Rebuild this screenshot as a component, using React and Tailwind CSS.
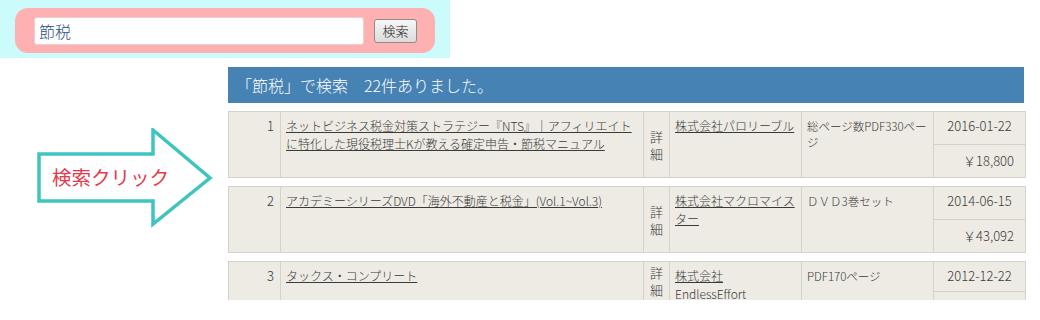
import React from 'react';

const rows = [
  {
    no: 1,
    title: 'ネットビジネス税金対策ストラテジー『NTS』｜アフィリエイトに特化した現役税理士Kが教える確定申告・節税マニュアル',
    company: ['株式会社パロリーブル'],
    desc: '総ページ数PDF330ページ',
    date: '2016-01-22',
    price: '￥18,800'
  },
  {
    no: 2,
    title: 'アカデミーシリーズDVD「海外不動産と税金」(Vol.1~Vol.3)',
    company: ['株式会社マクロマイスター'],
    desc: 'ＤＶＤ3巻セット',
    date: '2014-06-15',
    price: '￥43,092'
  },
  {
    no: 3,
    title: 'タックス・コンプリート',
    company: ['株式会社', 'EndlessEffort'],
    desc: 'PDF170ページ',
    date: '2012-12-22',
    price: '￥9,800',
    short: true
  }
];

function Arrow() {
  return (
    <svg width="228" height="110" viewBox="0 0 228 110">
      {/* 矢印の外枠 */}
      <path
        d="M39 26 L153 26 L153 2 L210 50 L153 96 L153 73 L39 73 Z"
        fill="white"
        stroke="#3fc4c0"
        strokeWidth="3.5"
        strokeLinejoin="miter"
      />
      <text
        x="52"
        y="57"
        fill="#e8394a"
        fontSize="19.5"
        fontWeight="400"
        fontFamily="'Noto Sans CJK JP', sans-serif"
      >
        検索クリック
      </text>
    </svg>
  );
}

function ResultRow({ item }) {
  const cell = 'border border-[#d4d2ca]';
  return (
    <table className="w-[797px] table-fixed border-collapse bg-[#edebe4] text-[#3a3a3a] mb-2">
      <colgroup>
        <col className="w-[52px]" />
        <col className="w-[363px]" />
        <col className="w-[26px]" />
        <col className="w-[132px]" />
        <col className="w-[132px]" />
        <col className="w-[92px]" />
      </colgroup>
      <tbody>
        <tr className={item.short ? 'h-[30px]' : 'h-[33px]'}>
          <td rowSpan={2} className={`${cell} align-top text-right pr-[6px] pt-[5px] text-[13px] leading-[18px]`}>
            {item.no}
          </td>
          <td rowSpan={2} className={`${cell} align-top px-[5px] pt-[5px] text-[12px] leading-[18px]`}>
            <a href="#" className="underline text-[#3a3a3a]">{item.title}</a>
          </td>
          {item.short ? (
            <td rowSpan={2} className={`${cell} align-top text-center pt-[2px] text-[13px] leading-[17px]`}>
              詳<br />細
            </td>
          ) : (
            <td rowSpan={2} className={`${cell} align-middle text-center text-[13px] leading-[17px]`}>
              詳<br />細
            </td>
          )}
          <td rowSpan={2} className={`${cell} align-top px-[5px] pt-[5px] text-[12px] leading-[18px]`}>
            <a href="#" className="underline text-[#3a3a3a]">
              {item.company.map((c, i) => (
                <React.Fragment key={i}>
                  {i > 0 && <br />}
                  {c}
                </React.Fragment>
              ))}
            </a>
          </td>
          <td rowSpan={2} className={`${cell} align-top px-[5px] pt-[6px] text-[11.5px] leading-[16px]`}>
            {item.desc}
          </td>
          <td className={`${cell} align-top text-center pt-[4px] text-[13px] leading-[20px]`}>
            {item.date}
          </td>
        </tr>
        <tr className="h-[33px]">
          <td className={`${cell} align-middle text-right pr-[11px] text-[13px] leading-[18px]`}>
            {item.price}
          </td>
        </tr>
      </tbody>
    </table>
  );
}

export default function App() {
  return (
    <div className="w-[1040px] h-[320px] bg-white font-['Noto_Sans_CJK_JP',sans-serif] font-light">
      <div className="h-[300px] overflow-hidden">
        {/* 検索フォーム */}
        <div className="w-[450px] h-[58px] bg-[#ccfbfb] pt-[8px] pl-[15px]">
          <div className="w-[420px] h-[45px] bg-[#ffb1b1] rounded-[13px] flex items-center pl-[19px] gap-[10px]">
            <input
              type="text"
              defaultValue="節税"
              className="w-[330px] h-[28px] bg-white border border-[#e6d0d0] rounded-[3px] px-[4px] text-[16px] text-[#2b4a7c] outline-none"
            />
            <button className="w-[43px] h-[24px] border border-[#8c8c8c] rounded-[3px] bg-gradient-to-b from-[#f7f7f7] to-[#dcdcdc] text-[13px] text-[#222]">
              検索
            </button>
          </div>
        </div>

        <div className="flex mt-[9px]">
          <div className="w-[228px] shrink-0 pt-[61px]">
            <Arrow />
          </div>
          <div>
            <div className="w-[796px] h-[36px] bg-[#4682b4] text-white text-[16px] flex items-center pl-[8px] mb-2">
              「節税」で検索　22件ありました。
            </div>
            {rows.map(item => (
              <ResultRow key={item.no} item={item} />
            ))}
          </div>
        </div>
      </div>
    </div>
  );
}
